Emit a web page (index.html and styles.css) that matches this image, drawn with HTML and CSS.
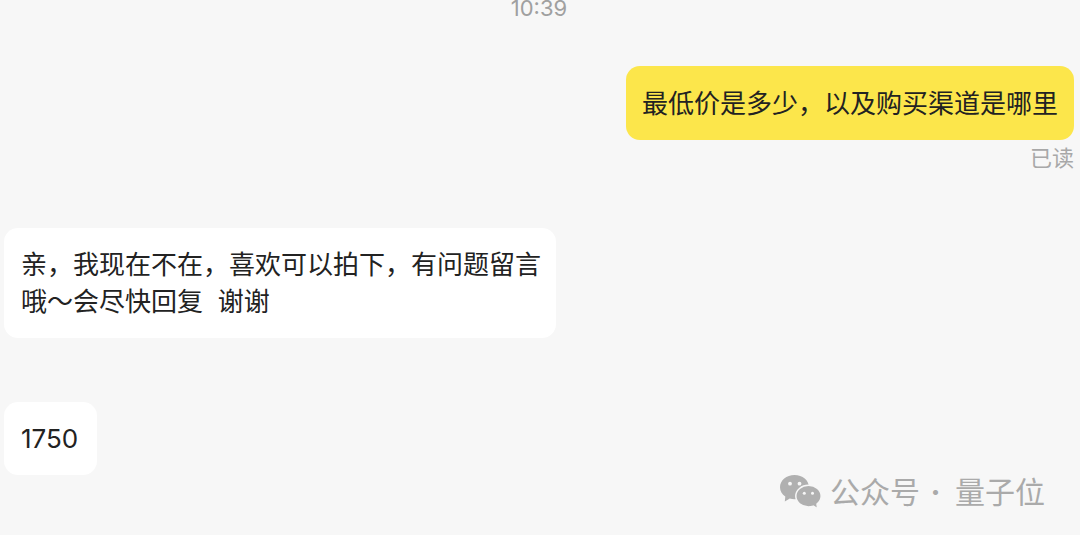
FILE: index.html
```html
<!DOCTYPE html>
<html lang="zh-CN">
  <head>
    <meta charset="UTF-8" />
    <meta name="viewport" content="width=device-width, initial-scale=1.0" />
    <title>聊天</title>
    <link rel="stylesheet" href="styles.css">
  </head>
  <body>
    <main class="chat">
      <time class="chat-time">10:39</time>

      <div class="message sent">
        <p class="bubble">最低价是多少，以及购买渠道是哪里</p>
        <span class="status">已读</span>
      </div>

      <div class="message">
        <p class="bubble">亲，我现在不在，喜欢可以拍下，有问题留言哦～会尽快回复&nbsp; 谢谢</p>
      </div>

      <div class="message">
        <p class="bubble">1750</p>
      </div>
    </main>

    <footer class="account">
      <svg class="account-icon" viewBox="0 0 42 36" aria-hidden="true">
        <path fill="#b0b0b0" d="M14.500 1C6.500 1 0 6.400 0 13.200c0 3.800 2 7.200 5.300 9.400L4.800 27.400l5-2.800c1.500.4 3.100.6 4.700.6C22.500 25.200 29 20 29 13.200S22.500 1 14.500 1z" />
        <path fill="#b0b0b0" stroke="#f7f7f7" stroke-width="1.500" d="M28.500 11.300c-7 0-12.700 4.800-12.700 10.800s5.700 10.800 12.700 10.800c1.700 0 3.300-.3 4.800-.8l4.400 2.700-.7-4.700c2.600-2 4.200-4.800 4.200-8 0-6-5.700-10.800-12.700-10.800z" />
        <g fill="#f7f7f7">
          <circle cx="10" cy="9.700" r="1.900" />
          <circle cx="19.500" cy="9.700" r="1.900" />
          <circle cx="24.300" cy="19.300" r="1.500" />
          <circle cx="32.500" cy="19.300" r="1.500" />
        </g>
      </svg>
      <span>公众号</span>
      <span class="dot">·</span>
      <span>量子位</span>
    </footer>
  </body>
</html>
```

FILE: styles.css
```css
* {
  box-sizing: border-box;
}

body {
  margin: 0;
  background-color: #f7f7f7;
  color: #222;
  font-family: Inter, "Noto Sans CJK SC", sans-serif;
}

.chat {
  display: flex;
  flex-direction: column;
  padding: 0 6px 0 4px;
}

.chat-time {
  height: 20px;
  margin-bottom: 46px;
  color: #a0a0a0;
  font-size: 22px;
  line-height: 16px;
  text-align: center;
}

.message {
  display: flex;
  flex-direction: column;
  align-items: flex-start;
  margin-bottom: 64px;
}

.bubble {
  min-width: 93px;
  max-width: 552px;
  margin: 0;
  padding: 18px 15px 18px 17px;
  border-radius: 14px;
  background-color: #fff;
  font-size: 26px;
  line-height: 37px;
}

.sent {
  align-items: flex-end;
  margin-bottom: 56px;
}

.sent .bubble {
  padding: 19px 16px 18px;
  background-color: #fce64b;
}

.status {
  margin-top: 4px;
  color: #a8a8a8;
  font-size: 22px;
  line-height: 28px;
}

.account {
  display: flex;
  align-items: center;
  justify-content: flex-end;
  margin-top: -65px;
  padding-right: 35px;
  color: #aaa;
  font-size: 30px;
  line-height: 36px;
}

.account-icon {
  width: 42px;
  height: 36px;
  margin-right: 8px;
}

.dot {
  width: 35px;
  padding-right: 4px;
  font-weight: 700;
  text-align: center;
}
```
